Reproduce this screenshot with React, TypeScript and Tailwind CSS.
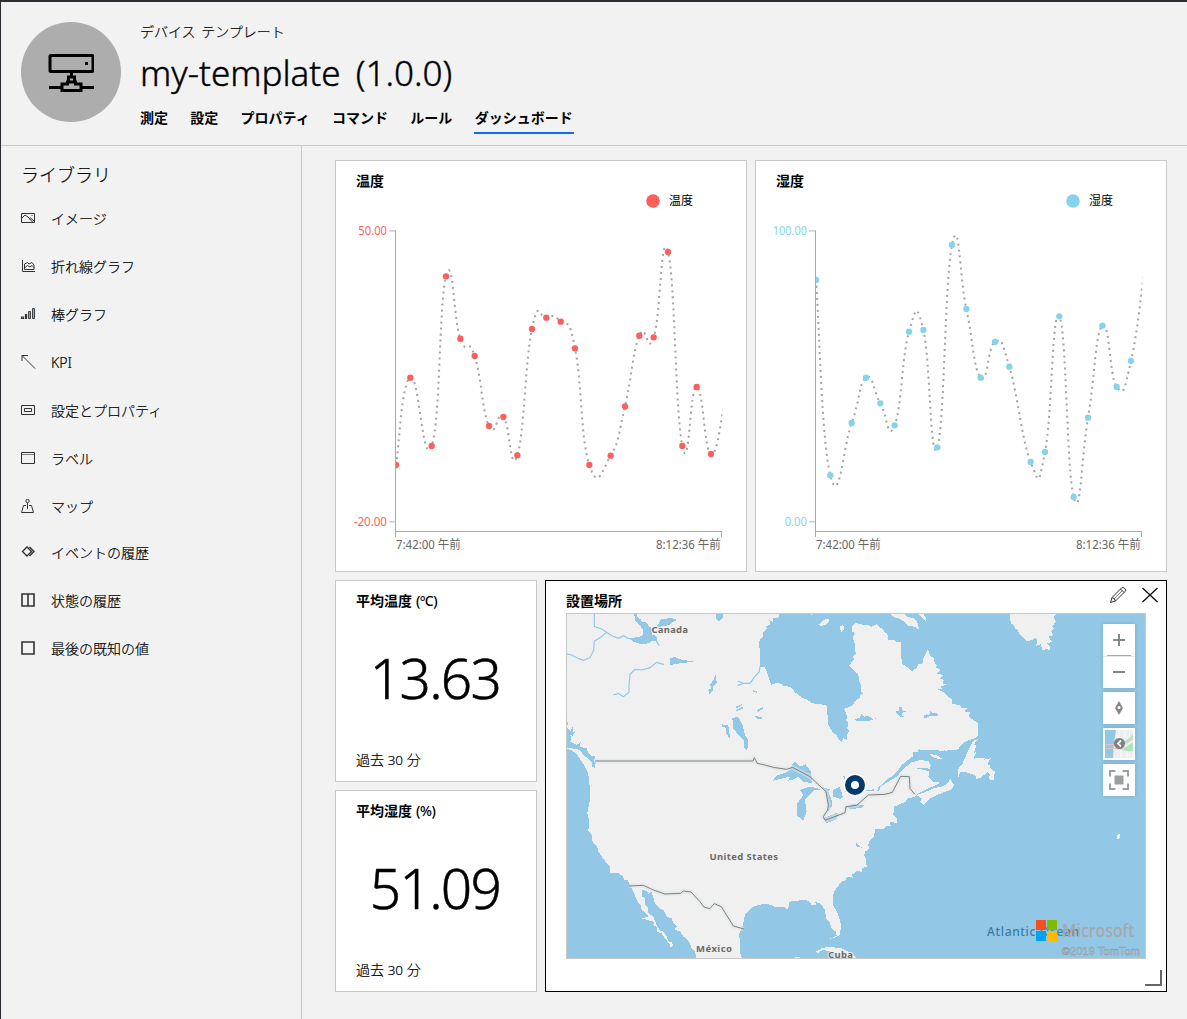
import React from "react";

type Point = [number, number];

const UI_FONT = "font-['Noto_Sans','Noto_Sans_CJK_JP',sans-serif]";

/* Cardinal spline with slightly loose tension, so peaks swing past the samples. */
function smoothPath(pts: Point[]): string {
  const at = (i: number) => pts[Math.max(0, Math.min(pts.length - 1, i))];
  let d = `M${pts[0][0]} ${pts[0][1]}`;
  for (let i = 0; i < pts.length - 1; i++) {
    const [p0, p1, p2, p3] = [at(i - 1), at(i), at(i + 1), at(i + 2)];
    const c1 = [p1[0] + (p2[0] - p0[0]) / 4, p1[1] + (p2[1] - p0[1]) / 4];
    const c2 = [p2[0] - (p3[0] - p1[0]) / 4, p2[1] - (p3[1] - p1[1]) / 4];
    d += `C${c1[0]} ${c1[1]} ${c2[0]} ${c2[1]} ${p2[0]} ${p2[1]}`;
  }
  return d;
}

const temperature: Point[] = [
  [183, 915], [226, 653], [290, 858], [333, 349], [376, 536], [419, 588], [462, 798], [505, 771],
  [547, 886], [591, 507], [634, 473], [677, 485], [720, 565], [763, 915], [827, 887], [870, 739],
  [913, 527], [956, 532], [999, 276], [1042, 858], [1085, 681], [1128, 882], [1171, 710],
];

const humidity: Point[] = [
  [183, 360], [226, 946], [290, 789], [333, 653], [376, 730], [419, 796], [462, 515], [505, 510],
  [547, 862], [591, 255], [634, 447], [677, 653], [720, 546], [763, 620], [827, 906], [870, 876],
  [913, 469], [956, 1011], [999, 773], [1042, 497], [1085, 681], [1128, 603], [1171, 305],
];

interface ChartProps {
  id: string;
  title: string;
  max: string;
  min: string;
  color: string;
  points: Point[];
}

function ChartCard({ id, title, max, min, color, points }: ChartProps) {
  return (
    <section className="h-[412px] w-[412px] border border-[#c8c8c8] bg-white">
      <h2 className="h-[49px] pl-5 pt-[10px] text-sm leading-5 font-bold">{title}</h2>
      <svg width="410" height="361" viewBox="3 150 1230 1083" className="block">
        <clipPath id={id}>
          <rect x="183" y="150" width="979" height="963" />
        </clipPath>
        <g clipPath={`url(#${id})`}>
          <path d={smoothPath(points)} fill="none" stroke="#a3a3a3" strokeWidth="6" strokeDasharray="6 12" />
          {points.slice(0, -1).map(([x, y]) => (
            <circle key={x} cx={x} cy={y} r="9.5" fill={color} />
          ))}
        </g>
        <path d="M162 212.500H181" stroke="#d0d0d0" strokeWidth="5" />
        <path d="M162 1085H181" stroke="#d0d0d0" strokeWidth="5" />
        <path d="M181.500 211V1131M180 1114.500H1161M1159.500 1114V1131" stroke="#a8a8a8" strokeWidth="3" fill="none" />
        <g fontSize="36" fill={color} textAnchor="end">
          <text x="156" y="224" textLength={max.length > 5 ? 103 : 86} lengthAdjust="spacingAndGlyphs">{max}</text>
          <text x="156" y="1097" textLength={min.length > 5 ? 100 : 67} lengthAdjust="spacingAndGlyphs">{min}</text>
        </g>
        <g fontSize="36" fill="#666">
          <text x="183" y="1167" textLength="194" lengthAdjust="spacingAndGlyphs">7:42:00 午前</text>
          <text x="963" y="1167" textLength="194" lengthAdjust="spacingAndGlyphs">8:12:36 午前</text>
        </g>
      </svg>
    </section>
  );
}

/* The legend sits over the chart's upper right corner. */
function Chart(props: ChartProps) {
  return (
    <div className="relative">
      <ChartCard {...props} />
      <div className="absolute top-[31px] left-[311px] flex items-center gap-[9px] text-xs leading-5">
        <svg width="14" height="14"><circle cx="7" cy="7" r="6.800" fill={props.color} /></svg>
        <span>{props.title}</span>
      </div>
    </div>
  );
}

function Kpi({ title, value }: { title: string; value: string }) {
  return (
    <section className="flex h-[202px] w-[202px] flex-col border border-[#c8c8c8] bg-white">
      <h2 className="pl-5 pt-[10px] text-sm leading-5 font-bold">
        {title.split(" ")[0]}
        <span className="ml-1 text-[14px] font-medium tracking-[-0.4px]">{title.split(" ")[1]}</span>
      </h2>
      <div className="mt-[26px] flex h-20 items-center justify-center pr-[2px] text-[55px] leading-none font-light tracking-[-1.700px] text-black [-webkit-text-stroke:0.5px_#000]">
        {value}
      </div>
      <div className="mt-[33px] pl-5 text-sm leading-5 font-light [-webkit-text-stroke:0.2px_#000]">
        過去 <span className="text-[13.500px]">30</span> 分
      </div>
    </section>
  );
}

/* ---------- library icons ---------- */

const icons: Record<string, React.ReactNode> = {
  image: <><path d="M.5 2.500h13v9H.5z" /><path d="M1 7l3-3 3 2L12 11.500M8 8l1.500-1 3.500 3" /><path d="M10 4.500h2" opacity=".4" /></>,
  line: <><path d="M1.500 1v11.500H14" /><path d="M3.500 10.500V5l3-1.500L8 5l3-1.500 2 2.500v4.500zM3.500 9l3-2.500L9 8l2-1.500 2 2" /></>,
  bar: <><path d="M.5 10h2v1.500h-2zM4.500 7.500h1v4h-1z" strokeWidth="1.200" /><path d="M7.500 4.500h2v7h-2zM11.500 1.500h2v10h-2z" fill="#6db9ea" strokeWidth=".9" /></>,
  kpi: <path d="M1 6V.5h6M1 .5l13 13" />,
  props: <><path d="M.5 2.500h13v9H.5z" /><path d="M3.500 5.500h7v3h-7z" /></>,
  label: <><path d="M.5 1.500h13v11H.5z" /><path d="M1 3.500h12" opacity=".6" /></>,
  map: <><circle cx="6.500" cy="2" r="1.700" /><path d="M6.500 4v6M5 6.500H2.500l-2 7h12l-2-7H8" /></>,
  event: <path d="M1.500 6.500l4.500-4.500 4.500 4.500L6 11zM8.500 2l4.500 4.500L8.500 11" strokeWidth="1.400" />,
  state: <path d="M1 1h12v12H1zM7 1v12" strokeWidth="1.600" />,
  last: <path d="M1 1h12v12H1z" strokeWidth="1.600" />,
};

const library: { icon: string; text: string; tight?: boolean }[] = [
  { icon: "image", text: "イメージ" },
  { icon: "line", text: "折れ線グラフ" },
  { icon: "bar", text: "棒グラフ" },
  { icon: "kpi", text: "KPI" },
  { icon: "props", text: "設定とプロパティ" },
  { icon: "label", text: "ラベル" },
  { icon: "map", text: "マップ", tight: true },
  { icon: "event", text: "イベントの履歴" },
  { icon: "state", text: "状態の履歴" },
  { icon: "last", text: "最後の既知の値" },
];

/* ---------- map ---------- */

const BORDERS = [
  "M-495 468H-21L-17 458-8 475 15 480 40 487 80 493 98 487 150 515 198 560 205 600 203 615 190 635 195 646 255 623 258 605 290 601 325 570 375 568 397 562 422 514 448 515 450 550 464 568",
  "M-393 843L-350 841-320 855-285 867-238 865-230 858-207 861-180 890-168 906-151 911-137 896-116 905-80 963-48 972",
];

function MapDrawing() {
  return (
    <svg width="578" height="344" viewBox="567 614 578 344" className="block bg-[#f0f0f0]">
      <g transform="translate(760 605) scale(.333333)">
        <g fill="#92c7e6" shapeRendering="crispEdges">
          {/* Hudson Bay, the Atlantic and the Gulf of Mexico */}
          <path d="M60 20L55 38 40 40 38 50 28 45 32 58 18 65 20 72 8 85 10 95 2 100-2 110 0 187 15 187 22 205 28 225 34 240 48 234 60 235 70 242 85 245 95 248 105 262 118 272 130 280 140 282 155 295 180 297 202 303 200 325 205 335 205 360 220 385 230 390 235 400 244 412 250 400 262 405 260 390 268 378 262 370 265 355 258 345 262 335 256 320 252 312 275 303 290 283 300 280 302 268 312 267 302 260 303 240 298 230 295 210 280 195 268 182 272 175 282 165 280 155 290 145 284 138 286 120 278 100 284 85 277 80 277 65 285 55 300 56 310 60 322 60 335 65 350 58 370 75 375 82 382 85 385 105 400 104 410 110 423 112 425 175 440 185 456 200 470 188 475 178 488 175 490 160 503 133 512 155 520 155 522 170 530 180 528 188 542 195 530 205 550 210 540 220 552 225 548 235 560 238 542 245 548 252 534 253 552 262 565 275 575 283 575 297 600 300 605 310 622 308 614 320 630 322 626 335 640 345 650 350 655 360 655 392 640 402 625 405 605 418 595 432 585 435 555 437 556 420 553 437 480 435 478 430 474 440 460 440 458 455 440 468 425 480 412 500 395 515 380 523 365 540 356 545 350 560 358 555 362 545 385 530 410 515 430 492 455 472 480 465 505 468 512 482 510 492 490 488 470 490 497 496 508 500 505 515 520 530 540 533 530 540 510 548 475 565 465 575 440 582 438 590 425 595 402 605 400 630 412 640 412 655 390 650 392 662 375 665 372 672 345 673 342 695 328 710 325 720 328 732 315 740 312 752 318 760 320 785 305 790 305 800 290 798 275 810 278 818 262 815 255 828 245 830 222 860 218 880 218 900 228 915 235 930 243 960 240 990 228 997 210 1001 230 993 228 980 215 970 208 950 198 940 195 915 185 900 178 893 165 892 170 900 155 900 145 887 130 885 88 890 88 900 82 912 70 905 50 907 25 898 5 898-20 905-45 930-53 965-62 985-60 1040-52 1070 1165 1070 1165 20Z" />
          {/* Pacific and the Gulf of California */}
          <path d="M-585 430L-565 436-550 447-538 465-525 485-516 505-512 525-510 585-518 625-512 650-515 677-505 690-502 710-488 725-485 740-475 755-460 775-450 785-450 803-425 805-410 815-408 825-398 825-388 845-378 865-365 893-358 900-355 915-342 925-335 935-355 940-330 947-318 950-320 960-310 965-310 980-295 985-285 1000-272 1017-268 1028-260 1020-264 1013-276 1008-280 995-290 980-300 978-310 960-320 935-335 925-335 910-345 898-345 880-353 875-353 855-340 858-335 866-325 860-315 895-300 912-290 915-280 935-265 940-260 955-250 965-258 972-240 980-230 995-222 1000-210 1015-205 1030-195 1040-188 1070-585 1070Z" />
          <path d="M-585 345L-577 350-578 370-568 378-562 365-562 380-552 380-562 390-555 395-570 390-565 402-570 410-550 420-538 412-540 425-520 430-515 445-505 455-500 452-495 455-498 470-493 475-495 488-505 486-503 475-515 462-532 448-540 435-565 430-585 428Z" />
          {/* northern lakes */}
          <path d="M-378 22L-368 28-370 35-358 43-355 50-342 52-332 65-320 72-325 90-312 92-308 108-325 108-332 115-360 117-380 110-388 104-385 98-362 97-350 88-352 72-375 45Z" />
          <path d="M-315 70L-300 50-298 42-282 42-270 38-248 45-265 52-270 60-300 65Z" />
          <path d="M-132 24H-112V38L-122 50-132 40ZM-270 160L-255 156-240 163-198 170-240 175-270 180ZM-132 208L-130 235-142 245-140 255-152 268-155 255-146 250-150 240-140 225Z" />
          <path d="M-83 338L-65 337-52 360-45 390-35 405-38 435-47 430-48 405-65 390-80 370ZM-115 358L-97 360-92 372-91 400-101 385-102 368-115 365ZM-72 305L-50 295-60 306-72 310ZM-72 315L-48 304-52 312-70 318ZM-12 318L8 306 8 312-5 320ZM-15 332L8 338 5 343-12 340ZM-20 256L-7 258-10 263-20 260Z" />
          <path d="M283 343L300 338 305 325 312 335 322 332 340 342 356 338 330 347 290 348ZM406 320L417 318 418 305 424 306 428 316 440 320 430 322 424 330 436 337 420 335ZM490 332L500 328 508 330 512 315 518 326 532 322 533 332 510 332 495 341Z" />
          {/* Great Lakes */}
          <path d="M37 528L50 512 85 500 100 473 107 470 120 485 137 478 153 500 157 535 130 530 115 515 100 523 85 527 90 515 75 518ZM120 555L150 545 185 553 165 555 150 570 135 585 140 620 130 647 122 640 110 630 112 595 130 570ZM185 545L210 553 205 560 215 585 215 605 203 622 205 585 198 565ZM218 555L240 545 248 575 240 582 220 575ZM190 640L235 622 232 640 200 655ZM258 607L280 597 312 600 308 607 275 613ZM250 513L256 515 252 525ZM318 555L342 553 340 558 320 558ZM288 713L292 718 308 730 298 726 290 725Z" />
        </g>
        <g fill="none" stroke="#92c7e6" strokeWidth="3.500">
          <path d="M-497 22V65L-475 72-460 82-445 92-425 100-410 92-395 100-375 103M-460 82L-480 98-497 108-499 135-510 158-530 166-550 158-565 150-582 147M-288 178L-310 172-330 188-355 195-375 193-390 208-393 240-393 262-410 275-425 265-440 270M0 185L-2 200-18 218-30 235-50 235-68 242M-50 235L-66 228M-312 95L-310 110-302 122" />
        </g>
        {/* islands */}
        <g fill="#f0f0f0" shapeRendering="crispEdges">
          <path d="M177 58L190 45 205 40 208 48 195 60 180 64ZM240 65L250 60 252 72 243 82ZM385 22L402 37 422 42 445 62 465 66 478 75 472 52 460 40 442 36 430 22ZM470 22L498 48 498 38 490 30 500 22ZM145 22H155V30Z" />
          <path d="M655 402L640 407 625 435 608 475 595 492 595 517 602 500 620 502 645 510 650 522 662 518 675 508 682 500 690 510 685 522 700 527 705 500 692 490 690 480 682 478 692 460 670 465 680 458 652 458 640 462 650 440 640 445 650 422 640 420 650 408ZM510 447L530 450 540 458 552 463 535 462 515 455ZM470 570L492 563 520 550 545 545 560 538 572 520 576 533 583 540 575 553 530 570 510 580 492 600 480 590 485 580Z" />
          <path d="M750 24L752 55 760 58 765 70 772 75 780 90 788 95 800 110 815 105 828 98 832 112 828 122 842 118 848 138 858 130 868 137 870 125 862 115 876 110 865 95 880 90 874 80 884 70 875 65 888 50 880 35 895 24ZM1071 690L1077 686 1080 690 1080 700 1071 702Z" />
          <path d="M168 1040L185 1030 205 1025 245 1030 270 1042 295 1062 245 1062 220 1042 190 1034 172 1045ZM92 1058L122 1057 115 1062H95Z" />
        </g>
        {BORDERS.map((d) => (
          <g key={d} fill="none" strokeLinejoin="round">
            <path d={d} stroke="#dde3e3" strokeOpacity=".55" strokeWidth="14" />
            <path d={d} stroke="#808080" strokeWidth="3" />
          </g>
        ))}
      </g>
      <g fontFamily="Noto Sans" fontWeight="700" fontSize="9.500" fill="#696969" stroke="#f0f0f0" strokeWidth="2" paintOrder="stroke">
        <text x="651.500" y="633" textLength="36.500">Canada</text>
        <text x="709.500" y="860" textLength="68.500">United States</text>
        <text x="696" y="952" textLength="36">México</text>
        <text x="828" y="958" textLength="25">Cuba</text>
      </g>
      <text x="987" y="935.500" textLength="92" fontSize="12" fontWeight="500" fill="#3e7ba3">Atlantic Ocean</text>
      <circle cx="855" cy="785" r="11.500" fill="#fff" />
      <circle cx="855" cy="785" r="7" fill="#fff" stroke="#003b69" strokeWidth="6" />
      <path fill="#f65022" d="M1036 920h10v10h-10z" />
      <path fill="#80bb01" d="M1047 920h10v10h-10z" />
      <path fill="#00a3f4" d="M1036 931h10v10h-10z" />
      <path fill="#ffb901" d="M1047 931h10v10h-10z" />
      <text x="1062" y="937" textLength="72.500" lengthAdjust="spacingAndGlyphs" fontFamily="Open Sans" fontWeight="600" fontSize="18" fill="#a6a9ab">Microsoft</text>
      <text x="1062" y="955" textLength="78" fontFamily="Liberation Sans" fontSize="11" fill="#b5d8ec" stroke="#92989c" strokeWidth=".5">©2019 TomTom</text>
    </svg>
  );
}

function MapControls() {
  const box = "flex h-8 w-8 items-center justify-center bg-white shadow-[0_0_4px_rgba(0,0,0,0.16)]";
  return (
    <div className="absolute top-[10px] right-[10px] flex flex-col gap-1">
      <div className="h-16 w-8 bg-white shadow-[0_0_4px_rgba(0,0,0,0.16)]">
        <svg width="32" height="64" fill="none">
          <path d="M16 10v12M10 16h12M10 48h12" stroke="#83888c" strokeWidth="2" />
          <path d="M0 32.500h32" stroke="#e8e8e8" />
          <path d="M4 31.500h24" stroke="#aaa" />
        </svg>
      </div>
      <div className={box}>
        <svg width="10" height="14" viewBox="0 0 10 14">
          <path d="M5 0L9 7 5 14 1 7Z" fill="#83888c" />
          <circle cx="5" cy="6.500" r="1.500" fill="#fff" />
        </svg>
      </div>
      <div className={box}>
        <svg width="28" height="28" viewBox="0 0 28 28">
          <path d="M0 0h28v28H0z" fill="#eee" />
          <path d="M0 0h11L9 13 8 28H0z" fill="#92c7e6" />
          <path d="M16 28V20M22 28V21M14 9V0M20 7V0" stroke="#fafafa" />
          <path d="M0 14.500H8L14 17 28 9M0 18.500H10L18 19 28 14" fill="none" stroke="#e3c4bd" />
          <path d="M17 12Q24 10 28 4V7Q24 12 18 15ZM18 20Q21 17 28 12V21Q22 22 18 20Z" fill="#a9e5b6" />
          <circle cx="14.500" cy="13.500" r="5.500" fill="#7d8184" />
          <path d="M16 10.500L13 13.500 16 16.500" fill="none" stroke="#fff" strokeWidth="1.800" />
        </svg>
      </div>
      <div className={box}>
        <svg width="20" height="20" viewBox="0 0 20 20" fill="none" stroke="#9b9fa3" strokeWidth="2">
          <path d="M1 6.500V1H6.500M13.500 1H19V6.500M19 13.500V19H13.500M6.500 19H1V13.500" />
          <path d="M5.500 5.500h9v9h-9z" fill="#9b9fa3" stroke="none" />
        </svg>
      </div>
    </div>
  );
}

function MapCard() {
  return (
    <section className="relative h-[412px] w-[622px] border border-black bg-white">
      <div className="flex h-8 items-start justify-between pl-5 pr-2">
        <h2 className="pt-[10px] text-sm leading-5 font-bold">設置場所</h2>
        <div className="flex gap-[14px] pt-[5px]">
          <svg width="18" height="18" viewBox="0 0 18 18" fill="none" stroke="#333" strokeWidth="1">
            <path d="M1.500 16.500L3 11.500 12.500 2Q14 .8 15.700 2.300 17.200 4 16 5.500L6.500 15ZM3 11.500Q5.800 12 6.500 15M11.500 3L15 6.500" />
            <path d="M5 12.800L13.200 4.800" strokeWidth=".7" />
          </svg>
          <svg width="17" height="17" viewBox="0 0 17 17" stroke="#111" strokeWidth="1.400">
            <path d="M1.500 2L16.500 16M16.500 2L1.500 16" />
          </svg>
        </div>
      </div>
      <div className="relative ml-5 h-[346px] w-[580px] border border-[#c8c8c8]">
        <MapDrawing />
        <MapControls />
      </div>
      <div className="absolute right-[4px] bottom-[5px] h-4 w-[17px] border-r-2 border-b-2 border-[#666]" />
    </section>
  );
}

export default function App() {
  const tabs = ["測定", "設定", "プロパティ", "コマンド", "ルール", "ダッシュボード"];
  return (
    <div className={`flex h-[1019px] w-[1187px] flex-col overflow-hidden border-t-2 border-l border-[#2b2d33] bg-[#f2f2f2] text-black ${UI_FONT}`}>
      <header className="flex h-[144px] shrink-0 border-b border-[#c8c8c8] pl-5">
        <div className="mt-5 flex h-[100px] w-[100px] items-center justify-center rounded-full bg-[#adadad]">
          <svg width="46" height="42" viewBox="0 0 46 42" fill="none" stroke="#000" strokeWidth="3">
            <rect x="2" y="4.500" width="43" height="16" rx="1" />
            <path d="M23.500 21v4M1 36.500h13M33 36.500h13M20.500 31v-5h6v5M14 39.500v-6.500h5.500v-2h8v2H33v6.500z" />
            <path d="M37 12.500h3" />
          </svg>
        </div>
        <div className="ml-[19px] flex flex-col">
          <div className="mt-[19.500px] text-sm leading-5 font-light [word-spacing:2px] [-webkit-text-stroke:0.2px_#000]">デバイス テンプレート</div>
          <h1 className="mt-[8.500px] flex h-[46px] items-center text-[35px] leading-[46px] font-light whitespace-pre [word-spacing:6px] [-webkit-text-stroke:0.4px_#000]">
            my-template (1.0.0)
          </h1>
          <nav className="mt-[11px] flex gap-[22.300px] text-sm leading-[22px] font-bold">
            {tabs.map((t, i) => (
              <span key={t} className={i === 5 ? "-ml-px h-[27px] w-[100px] border-b-2 border-[#0f6cf5] pl-px" : ""}>
                {t}
              </span>
            ))}
          </nav>
        </div>
      </header>
      <div className="flex min-h-0 flex-1">
        <aside className="w-[301px] shrink-0 border-r border-[#c8c8c8] pl-5 [-webkit-text-stroke:0.2px_#000]">
          <h2 className="mt-[15px] mb-[20px] text-lg leading-7 font-light">ライブラリ</h2>
          <ul className="-mt-[14px] flex flex-col">
            {library.map((l) => (
              <li key={l.text} className={`flex h-12 items-center gap-4 ${l.tight ? "-mb-0.5" : ""}`}>
                <svg width="14" height="14" viewBox="0 0 14 14" fill="none" stroke="#333" className="-mt-[3px] overflow-visible">
                  {icons[l.icon]}
                </svg>
                <span className="text-sm leading-5 font-light">{l.text}</span>
              </li>
            ))}
          </ul>
        </aside>
        <main className="flex flex-col gap-2 pt-[14px] pl-[33px]">
          <div className="flex gap-2">
            <Chart id="clip-temp" title="温度" max="50.00" min="-20.00" color="#ff5f5b" points={temperature} />
            <Chart id="clip-hum" title="湿度" max="100.00" min="0.00" color="#88d3ec" points={humidity} />
          </div>
          <div className="flex gap-2">
            <div className="flex flex-col gap-2">
              <Kpi title="平均温度 (ºC)" value="13.63" />
              <Kpi title="平均湿度 (%)" value="51.09" />
            </div>
            <MapCard />
          </div>
        </main>
      </div>
    </div>
  );
}
